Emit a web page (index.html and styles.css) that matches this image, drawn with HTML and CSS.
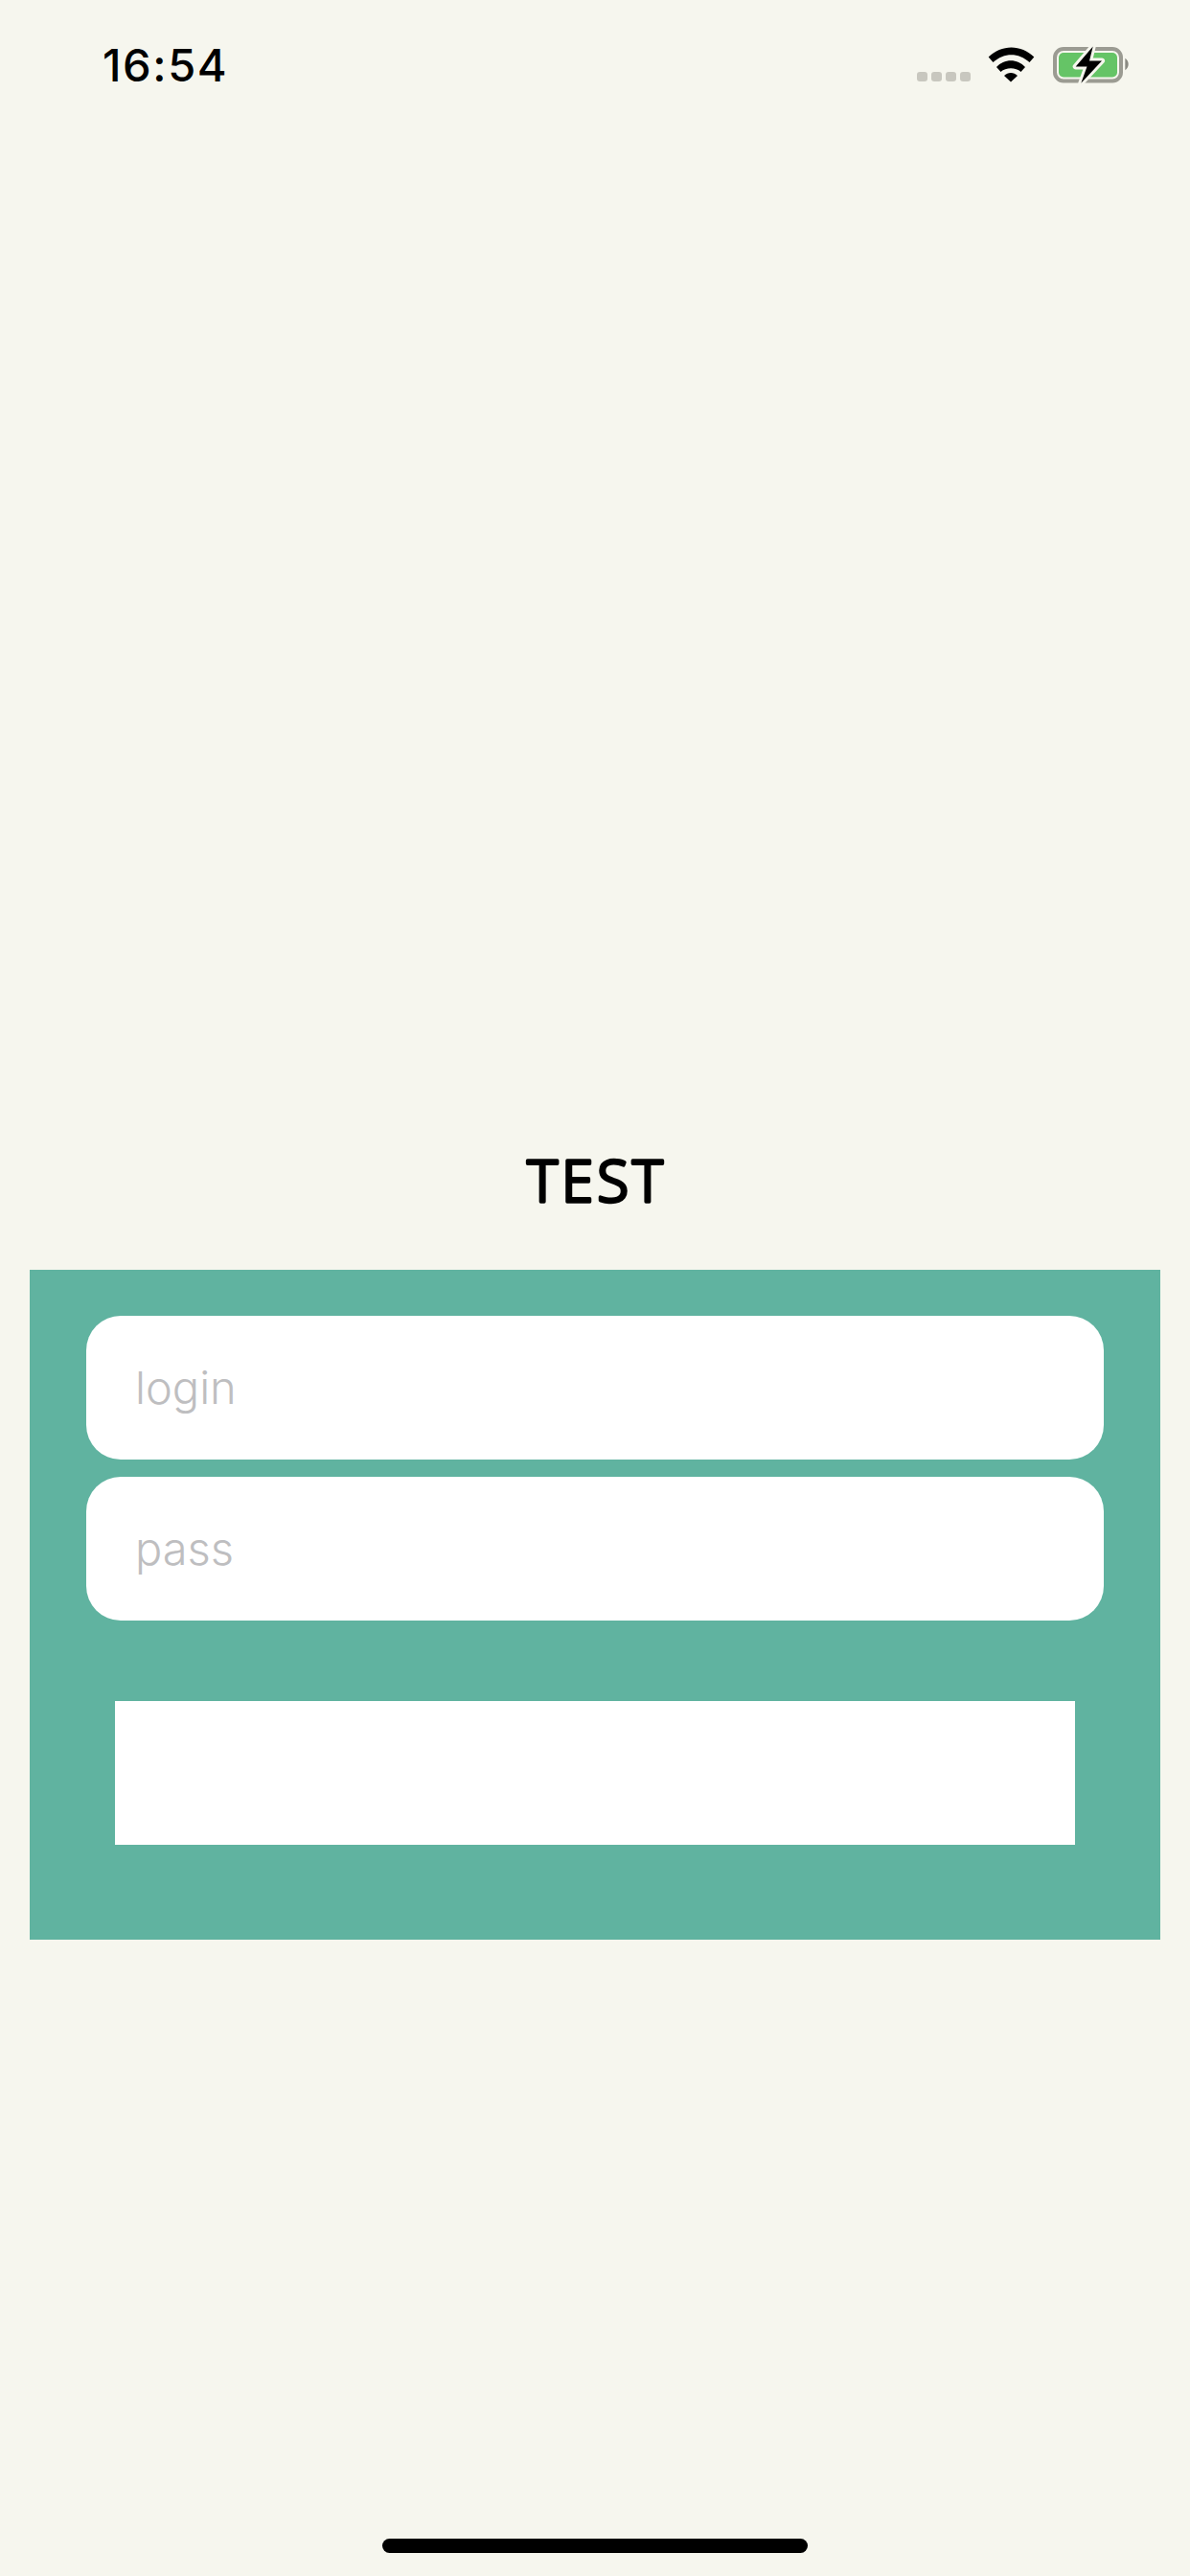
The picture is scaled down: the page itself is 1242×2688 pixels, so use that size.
FILE: index.html
```html
<!DOCTYPE html>
<html lang="en">
<head>
<meta charset="utf-8">
<title>TEST</title>
<link rel="stylesheet" href="styles.css">
</head>
<body>
<div class="screen">
  <header class="status-bar">
    <span class="time">16:54</span>
    <svg class="status-icons" width="222" height="40" viewBox="0 0 222 40" aria-hidden="true">
      <g class="signal">
        <rect x="0" y="27" width="11" height="10" rx="3"/>
        <rect x="15" y="27" width="11" height="10" rx="3"/>
        <rect x="30" y="27" width="11" height="10" rx="3"/>
        <rect x="45" y="27" width="11" height="10" rx="3"/>
      </g>
      <path d="M74.7 11.5C88-2 109-2 122.3 11.5L117.5 17C106 6.5 91 6.5 79.5 17Z"/>
      <path d="M83 22C91 13 105 13 113 22L108.5 27C103 22 93 22 87.5 27Z"/>
      <path d="M91 31C95 27 101 27 105 31L98 37.5Z"/>
      <rect class="batt-frame" x="144" y="3" width="69" height="33.5" rx="9"/>
      <rect class="batt-fill" x="148" y="7" width="61" height="25.5" rx="5"/>
      <path class="batt-nub" d="M217.3 12.7C219.5 14 220.7 16.5 220.7 19S219.5 24 217.3 25.3Z"/>
      <path class="bolt" d="M183.7 0.5L165.7 21.5H177.5L171.3 38.7L193 15.5H180Z"/>
    </svg>
  </header>
  <main class="login">
    <h1 class="title">
      <svg class="title-art" width="1180" height="173" viewBox="0 0 1180 173">
        <text class="title-text" x="592" y="102">TEST</text>
      </svg>
    </h1>
    <form class="panel">
      <input class="field" type="text" placeholder="login">
      <input class="field" type="password" placeholder="pass">
      <button class="submit" type="button"></button>
    </form>
  </main>
  <div class="home-indicator"></div>
</div>
</body>
</html>
```
FILE: styles.css
```css
* { box-sizing: border-box; }
html, body { margin: 0; padding: 0; }
body { background: #f6f6ee; font-family: Inter, "Liberation Sans", sans-serif; }

.screen {
  width: 1242px;
  height: 2688px;
  display: flex;
  flex-direction: column;
  background: #f6f6ee;
}

.status-bar {
  height: 134px;
  padding: 48px 63px 0 107px;
  display: flex;
  justify-content: space-between;
  align-items: flex-start;
}
.time {
  font-size: 47px;
  font-weight: 500;
  line-height: 40px;
  color: #000;
  letter-spacing: 1.6px;
}
.status-icons { display: block; fill: #000; }
.signal { fill: #c8c7bf; }
.batt-frame { fill: none; stroke: #9b9b92; stroke-width: 4; }
.batt-fill { fill: #65c466; }
.batt-nub { fill: #8a8a82; }
.bolt { fill: #000; stroke: #f6f6ee; stroke-width: 6; paint-order: stroke; stroke-linejoin: round; }

.login { padding: 1018px 31px 0; }

.title { margin: 0; }
.title-art { display: block; }
.title-text {
  font-family: "Noto Sans", sans-serif;
  font-size: 60px;
  font-weight: 300;
  letter-spacing: 4px;
  text-anchor: middle;
  fill: #000;
  stroke: #000;
  stroke-width: 3.5px;
  stroke-linejoin: round;
  stroke-linecap: round;
}

.panel {
  height: 699px;
  background: #60b3a0;
  padding: 48px 59px 0;
  display: flex;
  flex-direction: column;
  gap: 18px;
}
.field {
  display: block;
  width: 100%;
  height: 150px;
  border: 0;
  border-radius: 36px;
  background: #fff;
  padding: 0 0 2px 51px;
  outline: none;
  font-family: Inter, sans-serif;
  font-size: 47px;
  font-weight: 300;
}
.field::placeholder { color: #bebec0; opacity: 1; }
.submit {
  display: block;
  height: 150px;
  margin: 66px 30px 0;
  border: 0;
  padding: 0;
  background: #fff;
}

.home-indicator {
  width: 444px;
  height: 15px;
  margin: auto auto 24px;
  border-radius: 8px;
  background: #000;
}
```
